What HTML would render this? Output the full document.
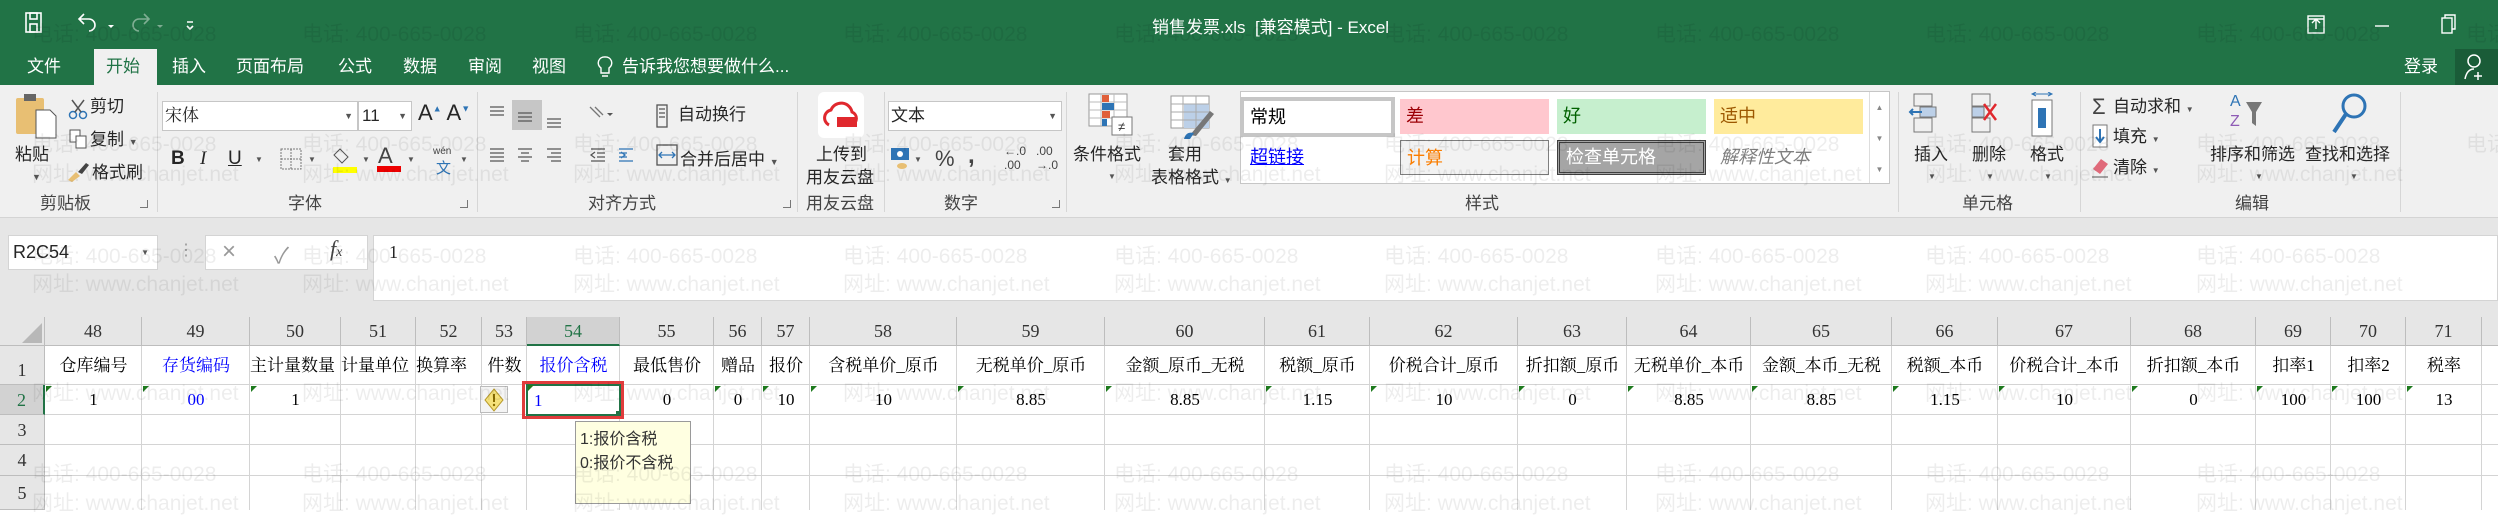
<!DOCTYPE html>
<html><head><meta charset="utf-8">
<style>
*{margin:0;padding:0;box-sizing:border-box}
body{width:2498px;height:510px;overflow:hidden;position:relative;background:#fff;font-family:"Liberation Sans","Noto Sans CJK SC",sans-serif;color:#262626}
.a{position:absolute;white-space:nowrap}
.t{font-size:17px;line-height:20px}
.w{color:#fff}
.sep{position:absolute;top:92px;width:1px;height:120px;background:#d6d6d6}
.gl{position:absolute;top:193px;font-size:17px;color:#444;line-height:22px}
.dl{position:absolute;top:200px;width:8px;height:8px;border-right:1px solid #777;border-bottom:1px solid #777}
.ch{position:absolute;top:317px;height:29px;background:#e6e6e6;border-right:1px solid #bdbdbd;border-bottom:1px solid #bdbdbd;font-family:"Liberation Serif","Noto Serif CJK SC",serif;font-size:18px;line-height:29px;text-align:center;color:#333}
.c{position:absolute;border-right:1px solid #d4d4d4;border-bottom:1px solid #d4d4d4;font-family:"Liberation Serif","Noto Serif CJK SC",serif;font-size:17px;overflow:hidden;white-space:nowrap;text-align:center;color:#000}
.r1{top:346px;height:39px;line-height:40px}
.r2{top:385px;height:30px;line-height:30px}
.r3{top:415px;height:30px}
.r4{top:445px;height:31px}
.r5{top:476px;height:34px}
.rh{position:absolute;left:0;width:45px;background:#e6e6e6;border-right:1px solid #bdbdbd;border-bottom:1px solid #bdbdbd;font-family:"Liberation Serif",serif;font-size:18px;text-align:center;color:#333}
.tri{position:absolute;top:386px;width:0;height:0;border-top:6px solid #1e7a1e;border-right:6px solid transparent}
.wm{position:absolute;font-size:21px;color:rgba(0,0,0,0.07);white-space:nowrap;font-family:"Liberation Sans","Noto Sans CJK SC",sans-serif;pointer-events:none}
.st{position:absolute;height:35px;font-size:18px;line-height:35px;padding-left:6px;font-family:"Liberation Sans","Noto Sans CJK SC",sans-serif}
</style></head><body>
<!-- title bar -->
<div class="a" style="left:0;top:0;width:2498px;height:85px;background:#217346"></div>
<svg class="a" style="left:24px;top:10px" width="200" height="26" viewBox="0 0 200 26" fill="none" stroke="#fff" stroke-width="1.6">
<rect x="2" y="3" width="15" height="19"/><rect x="6" y="3" width="7" height="6"/><rect x="6" y="14" width="7" height="8"/>
<path d="M60 8 l-5 5 l5 5 M55 13 h10 a6 6 0 0 1 0 12" transform="translate(0,-4)"/>
<path d="M84 15 l3 3 l3 -3" fill="#fff" stroke="none"/>
<path d="M120 8 l5 5 l-5 5 M125 13 h-10 a6 6 0 0 0 0 12" transform="translate(0,-4)" stroke="#7fae93"/>
<path d="M133 15 l3 3 l3 -3" fill="#7fae93" stroke="none"/>
<path d="M163 12 h6 M163 16 l3 3 l3 -3" />
</svg>
<div class="a w" style="left:1152px;top:13px;font-size:17px">销售发票.xls&nbsp; [兼容模式] - Excel</div>
<svg class="a" style="left:2300px;top:12px" width="190" height="26" fill="none" stroke="#fff" stroke-width="1.4">
<rect x="8" y="4" width="16" height="17"/><path d="M16 17 v-9 M12 11 l4-4 4 4 M8 7 h16"/>
<path d="M75 14 h14"/>
<rect x="142" y="6" width="10" height="15"/><path d="M145 6 v-3 h10 v14 h-3"/>
</svg>
<!-- tabs -->
<div class="a" style="left:94px;top:49px;width:63px;height:36px;background:#f0f0f0"></div>
<div class="a t w" style="left:27px;top:57px">文件</div>
<div class="a t" style="left:106px;top:57px;color:#217346">开始</div>
<div class="a t w" style="left:172px;top:57px">插入</div>
<div class="a t w" style="left:236px;top:57px">页面布局</div>
<div class="a t w" style="left:338px;top:57px">公式</div>
<div class="a t w" style="left:403px;top:57px">数据</div>
<div class="a t w" style="left:468px;top:57px">审阅</div>
<div class="a t w" style="left:532px;top:57px">视图</div>
<svg class="a" style="left:596px;top:55px" width="18" height="26" fill="none" stroke="#fff" stroke-width="1.4"><path d="M9 2 a6 6 0 0 1 4 11 v5 h-8 v-5 a6 6 0 0 1 4-11z M6 21 h6"/></svg>
<div class="a t w" style="left:622px;top:57px">告诉我您想要做什么...</div>
<div class="a t w" style="left:2404px;top:57px">登录</div>
<div class="a" style="left:2455px;top:49px;width:43px;height:36px;background:#1a5c38"></div>
<svg class="a" style="left:2462px;top:52px" width="30" height="30" fill="none" stroke="#fff" stroke-width="1.5"><circle cx="12" cy="9" r="6"/><path d="M3 27 q2-10 9-10 M16 20 v8 M12 24 h8"/></svg>
<!-- ribbon -->
<div class="a" style="left:0;top:85px;width:2498px;height:133px;background:#f0f0f0;border-bottom:1px solid #d4d4d4"></div>
<!-- clipboard -->
<svg class="a" style="left:14px;top:92px" width="46" height="48"><rect x="2" y="6" width="28" height="36" rx="2" fill="#e8bf73"/><rect x="10" y="2" width="12" height="7" fill="#666"/><path d="M22 18 h14 l6 6 v22 h-20z" fill="#fff" stroke="#555"/></svg>
<div class="a t" style="left:15px;top:145px">粘贴</div>
<div class="a" style="left:32px;top:172px;font-size:9px;color:#555">▼</div>
<svg class="a" style="left:68px;top:98px" width="20" height="22" fill="none" stroke="#2e74b5" stroke-width="1.5"><circle cx="5" cy="17" r="3.5"/><circle cx="15" cy="17" r="3.5"/><path d="M7 14 L16 2 M13 14 L4 2" stroke="#555"/></svg>
<div class="a t" style="left:90px;top:97px">剪切</div>
<svg class="a" style="left:68px;top:128px" width="20" height="22" fill="#fff" stroke="#555"><rect x="2" y="2" width="10" height="12"/><rect x="8" y="8" width="10" height="12"/></svg>
<div class="a t" style="left:90px;top:130px">复制 <span style="font-size:9px;color:#555">▼</span></div>
<svg class="a" style="left:66px;top:160px" width="24" height="22"><path d="M2 20 l8-8 4 4 -8 6z" fill="#e8bf73"/><path d="M12 12 l8-9 3 2 -7 9z" fill="#444"/></svg>
<div class="a t" style="left:92px;top:163px">格式刷</div>
<div class="gl" style="left:40px">剪贴板</div><div class="dl" style="left:140px"></div>
<div class="sep" style="left:157px"></div>
<!-- font -->
<div class="a" style="left:162px;top:101px;width:196px;height:30px;background:#fff;border:1px solid #c6c6c6;font-family:'Liberation Serif','Noto Serif CJK SC',serif;font-size:17px;line-height:28px;padding-left:2px">宋体<span style="position:absolute;right:4px;font-size:9px;color:#555">▼</span></div>
<div class="a" style="left:358px;top:101px;width:54px;height:30px;background:#fff;border:1px solid #c6c6c6;font-size:17px;line-height:28px;padding-left:3px">11<span style="position:absolute;right:4px;font-size:9px;color:#555">▼</span></div>
<div class="a" style="left:418px;top:100px;font-size:22px">A<sup style="font-size:9px;color:#2e74b5">▲</sup> A<sup style="font-size:9px;color:#2e74b5">▼</sup></div>
<div class="a" style="left:171px;top:148px;font-size:19px;font-weight:bold">B</div>
<div class="a" style="left:200px;top:148px;font-size:19px;font-style:italic;font-family:'Liberation Serif',serif">I</div>
<div class="a" style="left:228px;top:148px;font-size:19px;text-decoration:underline">U</div>
<div class="a" style="left:255px;top:155px;font-size:8px;color:#555">▼</div>
<svg class="a" style="left:280px;top:148px" width="22" height="22" fill="none" stroke="#777" stroke-dasharray="2 1"><rect x="1" y="1" width="20" height="20"/><path d="M11 1 v20 M1 11 h20"/></svg>
<div class="a" style="left:308px;top:155px;font-size:8px;color:#555">▼</div>
<svg class="a" style="left:332px;top:146px" width="26" height="28"><path d="M8 3 l8 8 -6 6 -8-8z" fill="none" stroke="#555"/><rect x="1" y="21" width="24" height="6" fill="#ffff00"/></svg>
<div class="a" style="left:362px;top:155px;font-size:8px;color:#555">▼</div>
<div class="a" style="left:378px;top:143px;font-size:22px;color:#444">A</div>
<div class="a" style="left:377px;top:166px;width:24px;height:6px;background:#e00"></div>
<div class="a" style="left:407px;top:155px;font-size:8px;color:#555">▼</div>
<div class="a" style="left:433px;top:147px;font-size:10px;color:#444;line-height:10px">wén</div>
<div class="a" style="left:436px;top:157px;font-size:15px;color:#2e74b5">文</div>
<div class="a" style="left:460px;top:155px;font-size:8px;color:#555">▼</div>
<div class="gl" style="left:288px">字体</div><div class="dl" style="left:460px"></div>
<div class="sep" style="left:477px"></div>
<!-- alignment -->
<div class="a" style="left:512px;top:100px;width:30px;height:30px;background:#c6c6c6"></div>
<svg class="a" style="left:487px;top:103px" width="300" height="70" fill="none" stroke="#555" stroke-width="1.3">
<path d="M3 4h14M3 8h14M3 12h14"/><path d="M31 10h14M31 14h14M31 18h14"/><path d="M60 16h14M60 20h14M60 24h14"/>
<path d="M103 4l10 10M108 4 l8 8" stroke="#777"/><path d="M120 10l3 3 3-3" fill="#555" stroke="none"/>
<path d="M3 46h14M3 50h14M3 54h14M3 58h14"/><path d="M31 46h14M34 50h8M31 54h14M34 58h8"/><path d="M60 46h14M64 50h10M60 54h14M64 58h10"/>
<path d="M104 46h14M110 50h8M110 54h8M104 58h14M108 49l-4 3 4 3" /><path d="M132 46h14M132 50h8M132 54h8M132 58h14M134 49l4 3 -4 3" stroke="#2e74b5"/>
<rect x="170" y="2" width="10" height="22"/><path d="M172 6h6M172 10h6M172 14h6"/>
<rect x="170" y="42" width="20" height="20"/><path d="M172 52h16M175 49l-3 3 3 3M185 49l3 3-3 3" stroke="#2e74b5"/>
</svg>
<div class="a t" style="left:678px;top:105px">自动换行</div>
<div class="a t" style="left:680px;top:150px">合并后居中 <span style="font-size:9px;color:#555">▼</span></div>
<div class="gl" style="left:588px">对齐方式</div><div class="dl" style="left:783px"></div>
<div class="sep" style="left:797px"></div>
<!-- cloud -->
<div class="a" style="left:818px;top:92px;width:46px;height:46px;background:#fff;border-radius:6px"></div>
<svg class="a" style="left:821px;top:97px" width="40" height="36"><path d="M8 28 a8 8 0 0 1 2-15 a11 11 0 0 1 21 2 a7 7 0 0 1 0 13" fill="none" stroke="#e0282e" stroke-width="3"/><rect x="16" y="20" width="20" height="10" fill="#e0282e"/></svg>
<div class="a t" style="left:816px;top:145px">上传到</div>
<div class="a t" style="left:806px;top:168px">用友云盘</div>
<div class="gl" style="left:806px">用友云盘</div>
<div class="sep" style="left:884px"></div>
<!-- number -->
<div class="a" style="left:888px;top:101px;width:174px;height:30px;background:#fff;border:1px solid #c6c6c6;font-size:17px;line-height:28px;padding-left:2px">文本<span style="position:absolute;right:4px;font-size:9px;color:#555">▼</span></div>
<svg class="a" style="left:890px;top:146px" width="22" height="26"><rect x="1" y="2" width="18" height="12" fill="#2e74b5"/><circle cx="10" cy="8" r="3" fill="#fff"/><ellipse cx="12" cy="20" rx="5" ry="3" fill="#e8bf73"/></svg>
<div class="a" style="left:914px;top:155px;font-size:8px;color:#555">▼</div>
<div class="a" style="left:935px;top:146px;font-size:22px;color:#444">%</div>
<div class="a" style="left:968px;top:142px;font-size:24px;font-weight:bold;color:#444">,</div>
<div class="a" style="left:1004px;top:144px;font-size:12px;line-height:14px;color:#444">←.0<br>.00</div>
<div class="a" style="left:1036px;top:144px;font-size:12px;line-height:14px;color:#444">.00<br>→.0</div>
<div class="gl" style="left:944px">数字</div><div class="dl" style="left:1052px"></div>
<div class="sep" style="left:1066px"></div>
<!-- styles -->
<svg class="a" style="left:1088px;top:93px" width="46" height="44"><g stroke="#999" fill="#fff"><rect x="1" y="1" width="38" height="32"/></g><path d="M1 9h38M1 17h38M1 25h38M13 1v32M26 1v32" stroke="#bbb"/><rect x="14" y="2" width="7" height="7" fill="#e0603a"/><rect x="14" y="10" width="12" height="7" fill="#2e74b5"/><rect x="14" y="18" width="8" height="7" fill="#e0603a"/><rect x="14" y="26" width="5" height="7" fill="#2e74b5"/><rect x="24" y="24" width="20" height="18" fill="#fff" stroke="#777"/><text x="30" y="38" font-size="13" fill="#333">≠</text></svg>
<div class="a t" style="left:1073px;top:145px">条件格式</div>
<div class="a" style="left:1108px;top:172px;font-size:8px;color:#555">▼</div>
<svg class="a" style="left:1170px;top:95px" width="46" height="44"><rect x="1" y="1" width="38" height="32" fill="#fff" stroke="#999"/><rect x="14" y="9" width="25" height="24" fill="#bcd0e8"/><path d="M1 9h38M1 17h38M1 25h38M13 1v32M26 1v32" stroke="#aaa"/><path d="M20 40 l20-24 4 3 -18 22z" fill="#777"/><path d="M14 44 q2-8 10-6 l-4 6z" fill="#2e74b5"/></svg>
<div class="a t" style="left:1168px;top:145px">套用</div>
<div class="a t" style="left:1151px;top:168px">表格格式 <span style="font-size:8px;color:#555">▼</span></div>
<div class="a" style="left:1240px;top:91px;width:650px;height:93px;background:#fff;border:1px solid #c6c6c6"></div>
<div class="st" style="left:1240px;top:97px;width:155px;height:40px;border:4px solid #c6c6c6;line-height:32px;color:#000;background:#fff">常规</div>
<div class="st" style="left:1400px;top:99px;width:149px;background:#ffc7ce;color:#9c0006">差</div>
<div class="st" style="left:1557px;top:99px;width:149px;background:#c6efce;color:#006100">好</div>
<div class="st" style="left:1714px;top:99px;width:149px;background:#ffeb9c;color:#9c5700">适中</div>
<div class="st" style="left:1244px;top:140px;width:150px;color:#0000ff;text-decoration:underline">超链接</div>
<div class="st" style="left:1400px;top:140px;width:149px;background:#f2f2f2;border:1px solid #7f7f7f;color:#fa7d00">计算</div>
<div class="st" style="left:1557px;top:140px;width:149px;background:#a5a5a5;border:3px double #3f3f3f;color:#fff;line-height:29px">检查单元格</div>
<div class="st" style="left:1714px;top:140px;width:149px;color:#7f7f7f;font-style:italic">解释性文本</div>
<div class="a" style="left:1869px;top:92px;width:20px;height:91px;border-left:1px solid #ddd;font-size:8px;color:#888;text-align:center;line-height:31px">▲<br>▼<br>▼</div>
<div class="gl" style="left:1465px">样式</div>
<div class="sep" style="left:1898px"></div>
<!-- cells -->
<svg class="a" style="left:1908px;top:92px" width="160" height="50" fill="none" stroke="#777">
<rect x="6" y="2" width="18" height="12"/><rect x="6" y="26" width="18" height="14"/><rect x="12" y="15" width="16" height="10" fill="#bcd0e8"/><path d="M2 20h12M5 17l-3 3 3 3" stroke="#2e74b5" stroke-width="2"/>
<rect x="64" y="2" width="18" height="12"/><rect x="64" y="26" width="18" height="14"/><rect x="64" y="15" width="12" height="10" fill="#bcd0e8"/><path d="M76 12 l12 16 M88 12 l-12 16" stroke="#e0282e" stroke-width="2.5"/>
<rect x="124" y="8" width="20" height="36" fill="#fff"/><rect x="130" y="16" width="8" height="20" fill="#2e74b5" stroke="none"/><path d="M124 2h20M128 0l-4 2 4 2M140 0l4 2-4 2" stroke="#2e74b5"/>
</svg>
<div class="a t" style="left:1914px;top:145px">插入</div>
<div class="a t" style="left:1972px;top:145px">删除</div>
<div class="a t" style="left:2030px;top:145px">格式</div>
<div class="a" style="left:1928px;top:172px;font-size:8px;color:#555">▼</div>
<div class="a" style="left:1986px;top:172px;font-size:8px;color:#555">▼</div>
<div class="a" style="left:2044px;top:172px;font-size:8px;color:#555">▼</div>
<div class="gl" style="left:1962px">单元格</div>
<div class="sep" style="left:2080px"></div>
<!-- editing -->
<div class="a" style="left:2092px;top:94px;font-size:22px;color:#444">Σ</div>
<div class="a t" style="left:2113px;top:97px">自动求和 <span style="font-size:8px;color:#555">▼</span></div>
<svg class="a" style="left:2092px;top:124px" width="16" height="24"><rect x="1" y="1" width="14" height="22" fill="#fff" stroke="#777"/><path d="M8 5v12M4 13l4 5 4-5" stroke="#2e74b5" stroke-width="2" fill="none"/></svg>
<div class="a t" style="left:2113px;top:127px">填充 <span style="font-size:8px;color:#555">▼</span></div>
<svg class="a" style="left:2090px;top:155px" width="20" height="24"><path d="M3 14 l8-10 7 5 -8 10z" fill="#e06a7a"/><path d="M2 22h16" stroke="#555"/></svg>
<div class="a t" style="left:2113px;top:158px">清除 <span style="font-size:8px;color:#555">▼</span></div>
<div class="a" style="left:2230px;top:92px;font-size:16px;line-height:20px;color:#2e74b5">A<br><span style="color:#8e5bb5">Z</span></div>
<svg class="a" style="left:2244px;top:100px" width="20" height="30"><path d="M2 2h16l-6 10v14l-4-3v-11z" fill="#777"/></svg>
<svg class="a" style="left:2330px;top:92px" width="40" height="46"><circle cx="24" cy="14" r="11" fill="none" stroke="#2e74b5" stroke-width="3"/><path d="M16 22 l-12 18" stroke="#2e74b5" stroke-width="4"/></svg>
<div class="a t" style="left:2210px;top:145px">排序和筛选</div>
<div class="a t" style="left:2305px;top:145px">查找和选择</div>
<div class="a" style="left:2255px;top:172px;font-size:8px;color:#555">▼</div>
<div class="a" style="left:2350px;top:172px;font-size:8px;color:#555">▼</div>
<div class="gl" style="left:2235px">编辑</div>
<div class="sep" style="left:2400px"></div>
<!-- formula bar -->
<div class="a" style="left:0;top:218px;width:2498px;height:99px;background:#e6e6e6"></div>
<div class="a" style="left:8px;top:235px;width:150px;height:35px;background:#fff;border:1px solid #d4d4d4;font-size:18px;line-height:33px;padding-left:4px">R2C54<span style="position:absolute;right:8px;font-size:8px;color:#555">▼</span></div>
<div class="a" style="left:178px;top:240px;color:#999;font-size:16px">⋮</div>
<div class="a" style="left:205px;top:235px;width:163px;height:35px;background:#fff;border:1px solid #d4d4d4"></div>
<div class="a" style="left:222px;top:238px;font-size:24px;color:#999">×</div>
<div class="a" style="left:274px;top:238px;font-size:22px;color:#999">✓</div>
<div class="a" style="left:330px;top:236px;font-size:22px;font-style:italic;font-family:'Liberation Serif',serif;color:#444">f<span style="font-size:14px">x</span></div>
<div class="a" style="left:373px;top:235px;width:2125px;height:66px;background:#fff;border:1px solid #d4d4d4;font-size:18px;line-height:33px;padding-left:15px;font-family:'Liberation Serif',serif">1</div>
<!-- select all -->
<div class="a" style="left:0;top:317px;width:45px;height:29px;background:#e6e6e6;border-right:1px solid #bdbdbd;border-bottom:1px solid #bdbdbd"></div>
<svg class="a" style="left:18px;top:321px" width="26" height="24"><path d="M24 2v20h-20z" fill="#b8b8b8"/></svg>
<!-- column headers -->
<div class="ch" style="left:45px;width:97px">48</div>
<div class="ch" style="left:142px;width:108px">49</div>
<div class="ch" style="left:250px;width:91px">50</div>
<div class="ch" style="left:341px;width:75px">51</div>
<div class="ch" style="left:416px;width:66px">52</div>
<div class="ch" style="left:482px;width:45px">53</div>
<div class="ch" style="left:527px;width:93px;background:#d2d2d2;border-bottom:2px solid #217346;color:#217346">54</div>
<div class="ch" style="left:620px;width:94px">55</div>
<div class="ch" style="left:714px;width:48px">56</div>
<div class="ch" style="left:762px;width:48px">57</div>
<div class="ch" style="left:810px;width:147px">58</div>
<div class="ch" style="left:957px;width:148px">59</div>
<div class="ch" style="left:1105px;width:160px">60</div>
<div class="ch" style="left:1265px;width:105px">61</div>
<div class="ch" style="left:1370px;width:148px">62</div>
<div class="ch" style="left:1518px;width:109px">63</div>
<div class="ch" style="left:1627px;width:124px">64</div>
<div class="ch" style="left:1751px;width:141px">65</div>
<div class="ch" style="left:1892px;width:106px">66</div>
<div class="ch" style="left:1998px;width:133px">67</div>
<div class="ch" style="left:2131px;width:125px">68</div>
<div class="ch" style="left:2256px;width:75px">69</div>
<div class="ch" style="left:2331px;width:75px">70</div>
<div class="ch" style="left:2406px;width:76px">71</div>
<div class="ch" style="left:2482px;width:30px"></div>
<!-- row headers -->
<div class="rh" style="top:346px;height:39px;line-height:48px">1</div>
<div class="rh" style="top:385px;height:30px;line-height:30px;background:#d2d2d2;border-right:2px solid #217346;color:#217346">2</div>
<div class="rh" style="top:415px;height:30px;line-height:30px">3</div>
<div class="rh" style="top:445px;height:31px;line-height:31px">4</div>
<div class="rh" style="top:476px;height:34px;line-height:34px">5</div>
<!-- grid -->
<div class="a" style="left:45px;top:346px;width:2453px;height:164px;background-image:repeating-linear-gradient(#0000,#0000)"></div>
<div class="a" style="left:45px;top:384px;width:2453px;height:1px;background:#d4d4d4"></div>
<div class="a" style="left:45px;top:414px;width:2453px;height:1px;background:#d4d4d4"></div>
<div class="a" style="left:45px;top:444px;width:2453px;height:1px;background:#d4d4d4"></div>
<div class="a" style="left:45px;top:475px;width:2453px;height:1px;background:#d4d4d4"></div>
<svg class="a" style="left:0;top:346px" width="2498" height="164"><g fill="#d4d4d4">
<rect x="141" width="1" height="164"/><rect x="249" width="1" height="164"/><rect x="340" width="1" height="164"/><rect x="415" width="1" height="164"/><rect x="481" width="1" height="164"/><rect x="526" width="1" height="164"/><rect x="619" width="1" height="164"/><rect x="713" width="1" height="164"/><rect x="761" width="1" height="164"/><rect x="809" width="1" height="164"/><rect x="956" width="1" height="164"/><rect x="1104" width="1" height="164"/><rect x="1264" width="1" height="164"/><rect x="1369" width="1" height="164"/><rect x="1517" width="1" height="164"/><rect x="1626" width="1" height="164"/><rect x="1750" width="1" height="164"/><rect x="1891" width="1" height="164"/><rect x="1997" width="1" height="164"/><rect x="2130" width="1" height="164"/><rect x="2255" width="1" height="164"/><rect x="2330" width="1" height="164"/><rect x="2405" width="1" height="164"/><rect x="2481" width="1" height="164"/></g></svg>
<!-- row 1 -->
<div class="c r1" style="left:45px;width:97px;border:none">仓库编号</div>
<div class="c r1" style="left:142px;width:108px;border:none;color:#0000ff">存货编码</div>
<div class="c r1" style="left:250px;width:91px;border:none;text-align:left">主计量数量</div>
<div class="c r1" style="left:341px;width:75px;border:none;text-align:left">计量单位</div>
<div class="c r1" style="left:416px;width:66px;border:none;text-align:left">换算率</div>
<div class="c r1" style="left:482px;width:45px;border:none">件数</div>
<div class="c r1" style="left:527px;width:93px;border:none;color:#0000ff">报价含税</div>
<div class="c r1" style="left:620px;width:94px;border:none">最低售价</div>
<div class="c r1" style="left:714px;width:48px;border:none">赠品</div>
<div class="c r1" style="left:762px;width:48px;border:none">报价</div>
<div class="c r1" style="left:810px;width:147px;border:none">含税单价_原币</div>
<div class="c r1" style="left:957px;width:148px;border:none">无税单价_原币</div>
<div class="c r1" style="left:1105px;width:160px;border:none">金额_原币_无税</div>
<div class="c r1" style="left:1265px;width:105px;border:none">税额_原币</div>
<div class="c r1" style="left:1370px;width:148px;border:none">价税合计_原币</div>
<div class="c r1" style="left:1518px;width:109px;border:none">折扣额_原币</div>
<div class="c r1" style="left:1627px;width:124px;border:none">无税单价_本币</div>
<div class="c r1" style="left:1751px;width:141px;border:none">金额_本币_无税</div>
<div class="c r1" style="left:1892px;width:106px;border:none">税额_本币</div>
<div class="c r1" style="left:1998px;width:133px;border:none">价税合计_本币</div>
<div class="c r1" style="left:2131px;width:125px;border:none">折扣额_本币</div>
<div class="c r1" style="left:2256px;width:75px;border:none">扣率1</div>
<div class="c r1" style="left:2331px;width:75px;border:none">扣率2</div>
<div class="c r1" style="left:2406px;width:76px;border:none">税率</div>
<!-- row 2 -->
<div class="c r2" style="left:45px;width:97px;border:none">1</div>
<div class="c r2" style="left:142px;width:108px;border:none;color:#0000ff">00</div>
<div class="c r2" style="left:250px;width:91px;border:none">1</div>
<div class="c r2" style="left:620px;width:94px;border:none">0</div>
<div class="c r2" style="left:714px;width:48px;border:none">0</div>
<div class="c r2" style="left:762px;width:48px;border:none">10</div>
<div class="c r2" style="left:810px;width:147px;border:none">10</div>
<div class="c r2" style="left:957px;width:148px;border:none">8.85</div>
<div class="c r2" style="left:1105px;width:160px;border:none">8.85</div>
<div class="c r2" style="left:1265px;width:105px;border:none">1.15</div>
<div class="c r2" style="left:1370px;width:148px;border:none">10</div>
<div class="c r2" style="left:1518px;width:109px;border:none">0</div>
<div class="c r2" style="left:1627px;width:124px;border:none">8.85</div>
<div class="c r2" style="left:1751px;width:141px;border:none">8.85</div>
<div class="c r2" style="left:1892px;width:106px;border:none">1.15</div>
<div class="c r2" style="left:1998px;width:133px;border:none">10</div>
<div class="c r2" style="left:2131px;width:125px;border:none">0</div>
<div class="c r2" style="left:2256px;width:75px;border:none">100</div>
<div class="c r2" style="left:2331px;width:75px;border:none">100</div>
<div class="c r2" style="left:2406px;width:76px;border:none">13</div>
<!-- green triangles -->
<div class="tri" style="left:46px"></div><div class="tri" style="left:143px"></div><div class="tri" style="left:251px"></div><div class="tri" style="left:715px"></div><div class="tri" style="left:763px"></div><div class="tri" style="left:811px"></div><div class="tri" style="left:958px"></div><div class="tri" style="left:1106px"></div><div class="tri" style="left:1266px"></div><div class="tri" style="left:1371px"></div><div class="tri" style="left:1519px"></div><div class="tri" style="left:1628px"></div><div class="tri" style="left:1752px"></div><div class="tri" style="left:1893px"></div><div class="tri" style="left:1999px"></div><div class="tri" style="left:2132px"></div><div class="tri" style="left:2257px"></div><div class="tri" style="left:2332px"></div><div class="tri" style="left:2407px"></div>
<!-- warning icon -->
<div class="a" style="left:480px;top:386px;width:28px;height:27px;background:#f4f4f4;border:1px solid #bbb"></div>
<svg class="a" style="left:482px;top:387px" width="24" height="26"><path d="M12 2 l9 11 -9 11 -9-11z" fill="#f6e27a" stroke="#b89b2c"/><path d="M12 7v8" stroke="#8a6d00" stroke-width="2"/><circle cx="12" cy="18" r="1.2" fill="#8a6d00"/></svg>
<!-- selected cell -->
<div class="a" style="left:522px;top:381px;width:102px;height:38px;border:3px solid #e03c3c"></div>
<div class="a" style="left:526px;top:384px;width:95px;height:32px;border:2px solid #217346"></div>
<div class="a" style="left:616px;top:411px;width:5px;height:5px;background:#217346"></div>
<div class="a" style="left:528px;top:385px;width:0;height:0;border-top:6px solid #1e7a1e;border-right:6px solid transparent"></div>
<div class="a" style="left:534px;top:386px;font-family:'Liberation Serif',serif;font-size:17px;line-height:30px;color:#0000ff">1</div>
<!-- tooltip -->
<div class="a" style="left:575px;top:421px;width:116px;height:83px;background:#ffffe1;border:1px solid #9a9a9a;font-size:16px;line-height:24px;padding:6px 0 0 4px;color:#333">1:报价含税<br>0:报价不含税</div>
<!-- watermarks -->
<div class="wm" style="left:32px;top:18px">电话: 400-665-0028</div><div class="wm" style="left:302px;top:18px">电话: 400-665-0028</div><div class="wm" style="left:573px;top:18px">电话: 400-665-0028</div><div class="wm" style="left:843px;top:18px">电话: 400-665-0028</div><div class="wm" style="left:1114px;top:18px">电话: 400-665-0028</div><div class="wm" style="left:1384px;top:18px">电话: 400-665-0028</div><div class="wm" style="left:1655px;top:18px">电话: 400-665-0028</div><div class="wm" style="left:1925px;top:18px">电话: 400-665-0028</div><div class="wm" style="left:2196px;top:18px">电话: 400-665-0028</div><div class="wm" style="left:2466px;top:18px">电话: 400-665-0028</div>
<div class="wm" style="left:32px;top:128px">电话: 400-665-0028</div><div class="wm" style="left:302px;top:128px">电话: 400-665-0028</div><div class="wm" style="left:573px;top:128px">电话: 400-665-0028</div><div class="wm" style="left:843px;top:128px">电话: 400-665-0028</div><div class="wm" style="left:1114px;top:128px">电话: 400-665-0028</div><div class="wm" style="left:1384px;top:128px">电话: 400-665-0028</div><div class="wm" style="left:1655px;top:128px">电话: 400-665-0028</div><div class="wm" style="left:1925px;top:128px">电话: 400-665-0028</div><div class="wm" style="left:2196px;top:128px">电话: 400-665-0028</div><div class="wm" style="left:2466px;top:128px">电话: 400-665-0028</div>
<div class="wm" style="left:32px;top:158px">网址: www.chanjet.net</div><div class="wm" style="left:302px;top:158px">网址: www.chanjet.net</div><div class="wm" style="left:573px;top:158px">网址: www.chanjet.net</div><div class="wm" style="left:843px;top:158px">网址: www.chanjet.net</div><div class="wm" style="left:1114px;top:158px">网址: www.chanjet.net</div><div class="wm" style="left:1384px;top:158px">网址: www.chanjet.net</div><div class="wm" style="left:1655px;top:158px">网址: www.chanjet.net</div><div class="wm" style="left:1925px;top:158px">网址: www.chanjet.net</div><div class="wm" style="left:2196px;top:158px">网址: www.chanjet.net</div>
<div class="wm" style="left:32px;top:240px">电话: 400-665-0028</div><div class="wm" style="left:302px;top:240px">电话: 400-665-0028</div><div class="wm" style="left:573px;top:240px">电话: 400-665-0028</div><div class="wm" style="left:843px;top:240px">电话: 400-665-0028</div><div class="wm" style="left:1114px;top:240px">电话: 400-665-0028</div><div class="wm" style="left:1384px;top:240px">电话: 400-665-0028</div><div class="wm" style="left:1655px;top:240px">电话: 400-665-0028</div><div class="wm" style="left:1925px;top:240px">电话: 400-665-0028</div><div class="wm" style="left:2196px;top:240px">电话: 400-665-0028</div>
<div class="wm" style="left:32px;top:268px">网址: www.chanjet.net</div><div class="wm" style="left:302px;top:268px">网址: www.chanjet.net</div><div class="wm" style="left:573px;top:268px">网址: www.chanjet.net</div><div class="wm" style="left:843px;top:268px">网址: www.chanjet.net</div><div class="wm" style="left:1114px;top:268px">网址: www.chanjet.net</div><div class="wm" style="left:1384px;top:268px">网址: www.chanjet.net</div><div class="wm" style="left:1655px;top:268px">网址: www.chanjet.net</div><div class="wm" style="left:1925px;top:268px">网址: www.chanjet.net</div><div class="wm" style="left:2196px;top:268px">网址: www.chanjet.net</div>
<div class="wm" style="left:32px;top:377px">网址: www.chanjet.net</div><div class="wm" style="left:302px;top:377px">网址: www.chanjet.net</div><div class="wm" style="left:573px;top:377px">网址: www.chanjet.net</div><div class="wm" style="left:843px;top:377px">网址: www.chanjet.net</div><div class="wm" style="left:1114px;top:377px">网址: www.chanjet.net</div><div class="wm" style="left:1384px;top:377px">网址: www.chanjet.net</div><div class="wm" style="left:1655px;top:377px">网址: www.chanjet.net</div><div class="wm" style="left:1925px;top:377px">网址: www.chanjet.net</div><div class="wm" style="left:2196px;top:377px">网址: www.chanjet.net</div>
<div class="wm" style="left:32px;top:458px">电话: 400-665-0028</div><div class="wm" style="left:302px;top:458px">电话: 400-665-0028</div><div class="wm" style="left:573px;top:458px">电话: 400-665-0028</div><div class="wm" style="left:843px;top:458px">电话: 400-665-0028</div><div class="wm" style="left:1114px;top:458px">电话: 400-665-0028</div><div class="wm" style="left:1384px;top:458px">电话: 400-665-0028</div><div class="wm" style="left:1655px;top:458px">电话: 400-665-0028</div><div class="wm" style="left:1925px;top:458px">电话: 400-665-0028</div><div class="wm" style="left:2196px;top:458px">电话: 400-665-0028</div>
<div class="wm" style="left:32px;top:487px">网址: www.chanjet.net</div><div class="wm" style="left:302px;top:487px">网址: www.chanjet.net</div><div class="wm" style="left:573px;top:487px">网址: www.chanjet.net</div><div class="wm" style="left:843px;top:487px">网址: www.chanjet.net</div><div class="wm" style="left:1114px;top:487px">网址: www.chanjet.net</div><div class="wm" style="left:1384px;top:487px">网址: www.chanjet.net</div><div class="wm" style="left:1655px;top:487px">网址: www.chanjet.net</div><div class="wm" style="left:1925px;top:487px">网址: www.chanjet.net</div><div class="wm" style="left:2196px;top:487px">网址: www.chanjet.net</div>
</body></html>
